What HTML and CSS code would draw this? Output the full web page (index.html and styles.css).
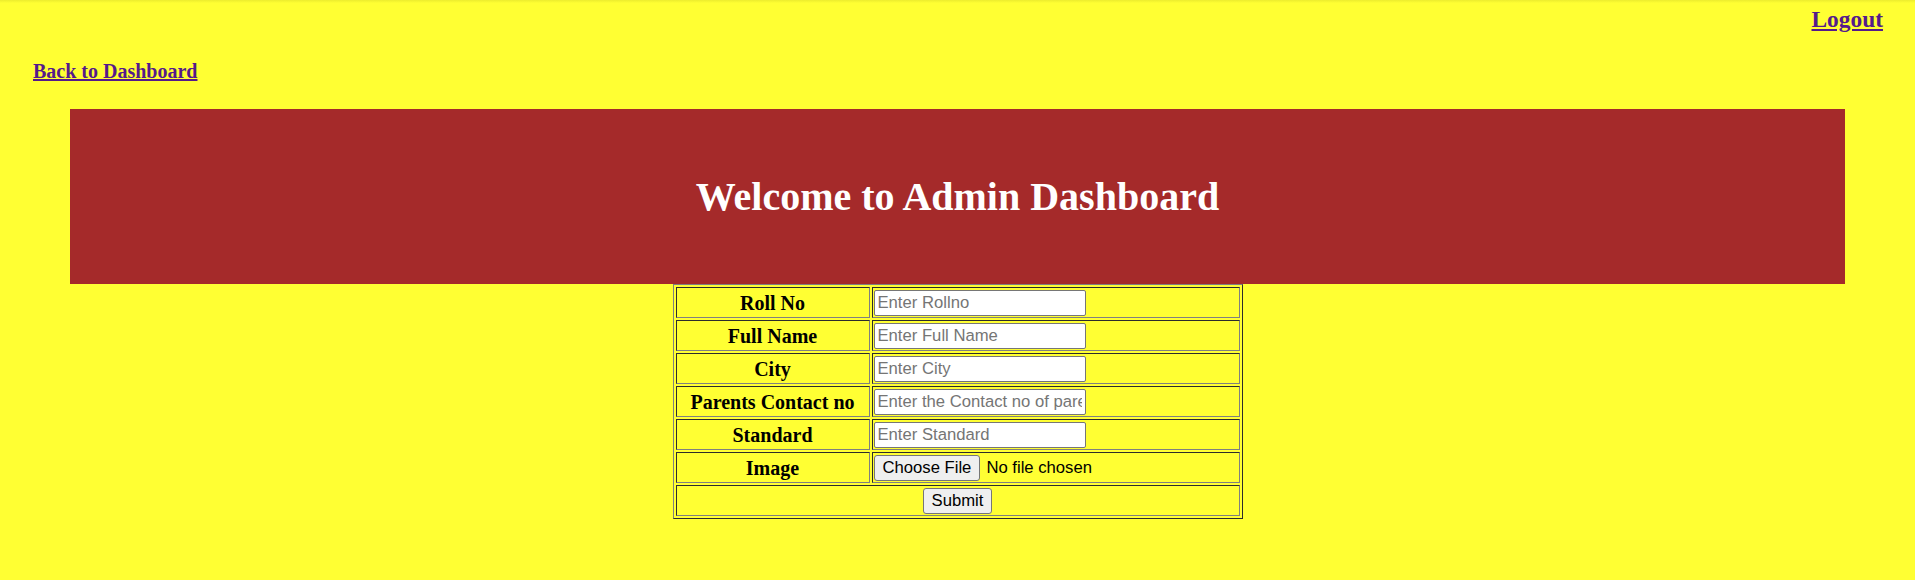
FILE: index.html
```html
<!DOCTYPE html>
<html lang="en">
<head>
<meta charset="utf-8">
<title>Admin Dashboard</title>
<link rel="stylesheet" href="styles.css">
</head>
<body>
<div class="topbar"><a class="logout" href="#">Logout</a></div>
<div class="back"><a class="back-link" href="#">Back to Dashboard</a></div>
<header class="banner"><h1 class="banner-title">Welcome to Admin Dashboard</h1></header>
<form class="student-form">
<table class="form-table">
<tr><th class="label">Roll No</th><td class="field"><input class="text-input" type="text" placeholder="Enter Rollno"></td></tr>
<tr><th class="label">Full Name</th><td class="field"><input class="text-input" type="text" placeholder="Enter Full Name"></td></tr>
<tr><th class="label">City</th><td class="field"><input class="text-input" type="text" placeholder="Enter City"></td></tr>
<tr><th class="label">Parents Contact no</th><td class="field"><input class="text-input" type="text" placeholder="Enter the Contact no of parents"></td></tr>
<tr><th class="label">Standard</th><td class="field"><input class="text-input" type="text" placeholder="Enter Standard"></td></tr>
<tr><th class="label">Image</th><td class="field"><button class="btn" type="button">Choose File</button><span class="file-status">No file chosen</span></td></tr>
<tr><td class="submit-cell" colspan="2"><button class="btn" type="submit">Submit</button></td></tr>
</table>
</form>
</body>
</html>
```
FILE: styles.css
```css
html, body {
  margin: 0;
  padding: 0;
}
body {
  background: linear-gradient(#ecec2e, #ffff33 3px) #ffff33;
  background-repeat: no-repeat;
  background-color: #ffff33;
  font-family: "Liberation Serif", "Times New Roman", serif;
  color: #000;
  min-height: 580px;
}
a {
  color: #551a8b;
  text-decoration: underline;
  font-weight: bold;
}
.topbar {
  padding: 6px 32px 0 0;
  text-align: right;
  line-height: normal;
}
.logout {
  font-size: 23.4px;
}
.back {
  margin-top: 27px;
  padding-left: 33px;
}
.back-link {
  font-size: 20px;
}
.banner {
  margin: 26px auto 0;
  width: 1775px;
  height: 175px;
  background: #a52a2a;
  display: flex;
  align-items: center;
  justify-content: center;
}
.banner-title {
  margin: 0;
  color: #fff;
  font-size: 40px;
  font-weight: bold;
}
.student-form {
  margin: 0;
}
.form-table {
  margin: 0 auto;
  border: 1px outset gray;
  border-spacing: 2px;
  width: 570px;
}
.label, .field, .submit-cell {
  border: 1px inset gray;
  padding: 2px 1px 1px 1px;
  box-sizing: border-box;
  height: 31px;
}
.label {
  width: 194px;
  font-size: 20px;
  font-weight: bold;
  text-align: center;
}
.field {
  text-align: left;
  font-family: "Liberation Sans", Arial, sans-serif;
  font-size: 16.67px;
}
.submit-cell {
  text-align: center;
  font-family: "Liberation Sans", Arial, sans-serif;
}
.text-input {
  box-sizing: border-box;
  width: 212px;
  height: 26px;
  margin: 0;
  padding: 1px 3px;
  border: 1px solid #767676;
  border-radius: 2px;
  background: #fff;
  font-family: "Liberation Sans", Arial, sans-serif;
  font-size: 16.67px;
  color: #000;
  vertical-align: middle;
}
.text-input::placeholder {
  color: #757575;
}
.btn {
  box-sizing: border-box;
  height: 26px;
  margin: 0;
  padding: 0 8px;
  border: 1px solid #767676;
  border-radius: 3px;
  background: #efefef;
  font-family: "Liberation Sans", Arial, sans-serif;
  font-size: 16.67px;
  color: #000;
  vertical-align: middle;
}
.file-status {
  margin-left: 6px;
  vertical-align: middle;
}
```
